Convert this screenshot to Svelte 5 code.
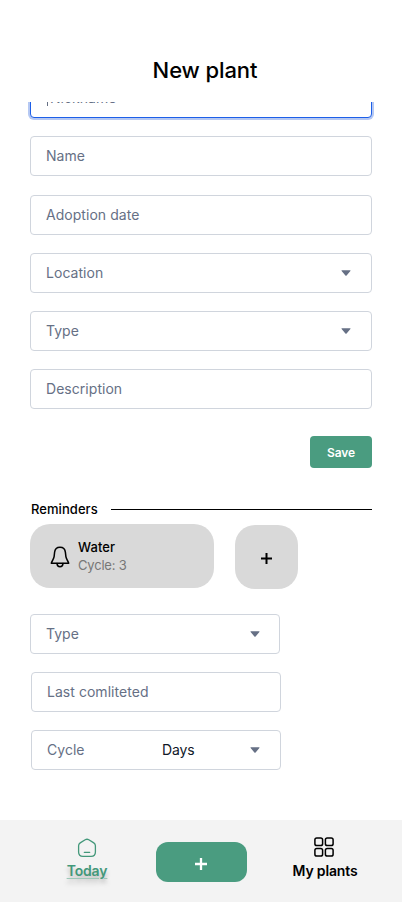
<script>
  const fields = [
    { label: 'Name', select: false },
    { label: 'Adoption date', select: false },
    { label: 'Location', select: true },
    { label: 'Type', select: true },
    { label: 'Description', select: false }
  ];
</script>

{#snippet caret()}
  <svg class="caret" width="10" height="6" viewBox="0 0 10 6"><path d="M1 .2h8c.5 0 .8.5.4.9L5.600 5.500a.8.8 0 0 1-1.200 0L.6 1.100C.2.7.5.2 1 .2z" fill="#667085" /></svg>
{/snippet}

<div class="screen">
  <header><h1>New plant</h1></header>

  <main>
    <div class="field focused"><span class="cursor"></span><span>Nickname</span></div>
    <div class="fields">
      {#each fields as field, i}
        <div class="field" class:lower={i === 0}>
          <span>{field.label}</span>
          {#if field.select}{@render caret()}{/if}
        </div>
      {/each}
    </div>

    <button class="save">Save</button>

    <div class="divider"><h2>Reminders</h2><i></i></div>

    <div class="cards">
      <div class="card">
        <svg width="20" height="22" viewBox="0 0 20 22" fill="none" stroke="#000" stroke-width="1.500" stroke-linejoin="round" stroke-linecap="round">
          <path d="M10 1.300C7.200 1.300 4.900 3.300 4.600 6.300L4.100 10.600C3.900 12.700 2.100 14.600 1.300 17.200H18.700C17.900 14.600 16.100 12.700 15.900 10.600L15.400 6.300C15.100 3.300 12.800 1.300 10 1.300Z" />
          <path d="M7 17.500C7.100 19.500 8.300 20.700 10 20.700S12.900 19.500 13 17.500" />
        </svg>
        <div class="info"><b>Water</b><span>Cycle: 3</span></div>
      </div>
      <button class="add" aria-label="Add reminder">
        <svg width="11" height="11" viewBox="0 0 11 11"><path d="M5.500 0v11M0 5.500h11" stroke="#000" stroke-width="2" /></svg>
      </button>
    </div>

    <div class="reminder">
      <div class="field first"><span>Type</span>{@render caret()}</div>
      <div class="field"><span>Last comliteted</span></div>
      <div class="field"><span class="cycle">Cycle</span><span class="days">Days</span>{@render caret()}</div>
    </div>
  </main>

  <nav>
    <div class="tab today">
      <svg width="20" height="20" viewBox="0 0 20 20" fill="none" stroke="#43987a" stroke-width="1.300" stroke-linejoin="round" stroke-linecap="round">
        <path d="M8.200 1.800Q10 .7 11.800 1.800L16.800 4.900Q18.400 5.900 18.400 7.800V14Q18.400 18.300 14.100 18.300H5.900Q1.600 18.300 1.600 14V7.800Q1.600 5.900 3.200 4.900Z" />
        <path d="M7.300 14.300h5.400" />
      </svg>
      <span>Today</span>
    </div>
    <button class="plus" aria-label="Add plant">
      <svg width="12" height="12" viewBox="0 0 12 12"><path d="M6 0v12M0 6h12" stroke="#fff" stroke-width="2.300" /></svg>
    </button>
    <div class="tab plants">
      <svg width="20" height="20" viewBox="0 0 20 20" fill="none" stroke="#000" stroke-width="1.500">
        <rect x=".9" y=".9" width="7.700" height="7.700" rx="1.900" />
        <rect x="11.400" y=".9" width="7.700" height="7.700" rx="1.900" />
        <rect x=".9" y="11.400" width="7.700" height="7.700" rx="1.900" />
        <rect x="11.400" y="11.400" width="7.700" height="7.700" rx="1.900" />
      </svg>
      <span>My plants</span>
    </div>
  </nav>
</div>

<style>
  :global(body) { margin: 0; background: #fff; }
  .screen {
    width: 402px; height: 902px; background: #fff; overflow: hidden;
    display: flex; flex-direction: column; color: #000;
    font-family: Inter, "Liberation Sans", sans-serif;
  }
  .screen :global(*) { box-sizing: border-box; }
  header { height: 102px; flex: none; padding: 56px 0 0 8px; text-align: center; }
  h1 { margin: 0; font-size: 22px; line-height: 28px; font-weight: 500; letter-spacing: -.1px; }
  main { flex: 1; overflow: hidden; padding: 0 30px; display: flex; flex-direction: column; }
  .field {
    height: 40px; flex: none; border: 1px solid #d0d5dd; border-radius: 4px; background: #fff;
    padding: 0 20px 0 15px; display: flex; align-items: center;
    font-size: 14px; line-height: 20px; color: #667085; white-space: nowrap;
    letter-spacing: .04px;
  }
  .focused { margin-top: -24px; border-color: #1d5fe8; box-shadow: 0 0 0 2px #b5c8f3; padding-left: 16px; }
  .cursor { width: 1px; height: 16px; background: #667085; margin-right: 2px; }
  .caret { margin-left: auto; flex: none; }
  .fields { display: flex; flex-direction: column; gap: 18px; margin-top: 18px; }
  .lower { margin-bottom: 1px; }
  button { border: 0; padding: 0; display: flex; align-items: center; justify-content: center; font-family: inherit; }
  .save {
    align-self: flex-end; flex: none; margin-top: 27px; width: 62px; height: 32px;
    border-radius: 4px; background: #4a9c80; color: #fff; font-size: 12px; font-weight: 600; letter-spacing: -.05px;
  }
  .divider { display: flex; align-items: center; height: 20px; margin: 31px 0 0 1px; flex: none; }
  h2 { margin: 0; width: 80px; font-size: 13px; font-weight: 500; line-height: 20px; white-space: nowrap; letter-spacing: .06px; }
  .divider i { flex: 1; height: 1px; background: #000; }
  .cards { display: flex; margin-top: 5px; gap: 21px; flex: none; }
  .card {
    width: 184px; height: 64px; border-radius: 20px; background: #d9d9d9;
    display: flex; align-items: center; padding-left: 20px; gap: 8px;
  }
  .card svg { margin-top: 2px; }
  .info { display: flex; flex-direction: column; font-size: 13px; line-height: 18px; }
  .info b { font-weight: 500; letter-spacing: .1px; }
  .info span { color: #777; letter-spacing: -.2px; }
  .add { width: 63px; height: 64px; margin-top: 1px; padding-top: 2px; border-radius: 20px; background: #d9d9d9; }
  .reminder { display: flex; flex-direction: column; gap: 18px; margin: 25px 0 0 1px; width: 250px; }
  .first { width: 250px; margin-left: -1px; padding-right: 19px; }
  .cycle { width: 115px; }
  .days { color: #101828; letter-spacing: -.1px; }
  nav { height: 82px; flex: none; background: #f3f3f3; display: flex; }
  .tab { display: flex; flex-direction: column; align-items: center; font-size: 14px; line-height: 20px; font-weight: 600; white-space: nowrap; letter-spacing: -.15px; }
  .today { width: 60px; margin-left: 57px; padding-top: 18px; color: #43987a; gap: 3px; }
  .today span { text-decoration: underline; text-decoration-thickness: 1px; text-underline-offset: 2px; text-decoration-color: #9dc8b8; text-shadow: 0 4px 4px rgba(0, 0, 0, .25); }
  .plus { width: 91px; height: 40px; margin: 22px 0 0 39px; padding: 4px 1px 0 0; border-radius: 12px; background: #4a9c80; }
  .plants { width: 80px; margin-left: 38px; padding-top: 17px; gap: 4px; }
  .plants svg { margin-right: 2px; }
</style>
